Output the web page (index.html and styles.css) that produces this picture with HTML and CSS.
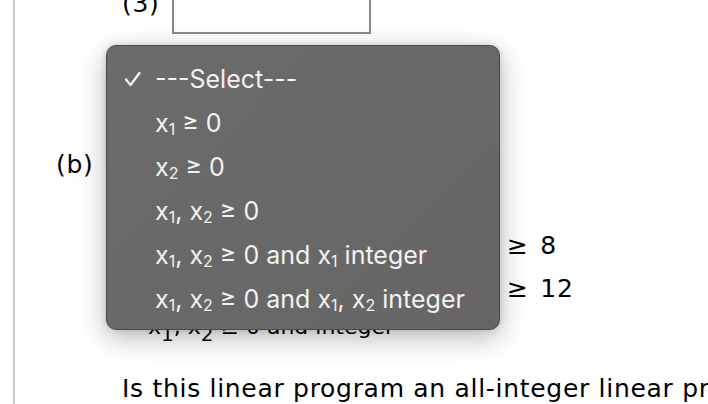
FILE: index.html
```html
<!DOCTYPE html>
<html>
<head>
<meta charset="utf-8">
<link rel="stylesheet" href="styles.css">
</head>
<body>
<div class="page">
  <div class="row3">
    <span class="label3">(3)</span>
    <span class="box"></span>
  </div>
  <div class="rowb">(b)</div>
  <div class="c1">&ge; 8</div>
  <div class="c2">&ge; 12</div>
  <div class="c3">x<sub>1</sub>, x<sub>2</sub> &ge; 0 and integer</div>
  <p class="question">Is this linear program an all-integer linear program?</p>
</div>
<div class="menu">
  <div class="item sel"><svg class="check" width="18" height="16" viewBox="0 0 18 16"><polyline points="2,8.5 6.5,14 15.5,2" fill="none" stroke="#f2f2f2" stroke-width="2.3" stroke-linecap="round" stroke-linejoin="round"/></svg>---Select---</div>
  <div class="item">x<sub>1</sub> &ge; 0</div>
  <div class="item">x<sub>2</sub> &ge; 0</div>
  <div class="item">x<sub>1</sub>, x<sub>2</sub> &ge; 0</div>
  <div class="item">x<sub>1</sub>, x<sub>2</sub> &ge; 0 and x<sub>1</sub> integer</div>
  <div class="item">x<sub>1</sub>, x<sub>2</sub> &ge; 0 and x<sub>1</sub>, x<sub>2</sub> integer</div>
</div>
</body>
</html>
```
FILE: styles.css
```css
html, body {
  margin: 0;
  padding: 0;
  background: #fff;
  overflow: hidden;
}
body {
  width: 708px;
  height: 404px;
  position: relative;
  font-family: "DejaVu Sans", Verdana, sans-serif;
  font-size: 25px;
  letter-spacing: 0.7px;
  line-height: 28px;
  color: #000;
}
.page {
  display: flow-root;
  margin-left: 13px;
  border-left: 2px solid #c8c8c8;
  height: 404px;
  box-sizing: border-box;
  overflow: hidden;
}
.row3 {
  display: flex;
  align-items: flex-end;
  margin-top: -40px;
  padding-left: 107px;
  height: 74px;
}
.label3 {
  margin-bottom: 16px;
}
.box {
  width: 195px;
  height: 50px;
  border: 2px solid #8a8a8a;
  margin-left: 12px;
}
.rowb {
  margin-top: 117px;
  padding-left: 41px;
  height: 28px;
}
.c1 {
  margin-top: 53px;
  padding-left: 492px;
  height: 43px;
  word-spacing: 3px;
}
.c2 {
  padding-left: 492px;
  height: 38px;
  word-spacing: 3px;
}
.c3 {
  padding-left: 133px;
  height: 28px;
  font-size: 22px;
  letter-spacing: 0;
}
.c3 sub {
  font-size: 20px;
  vertical-align: -7px;
  line-height: 0;
}
.question {
  margin: 34px 0 0 107px;
  white-space: nowrap;
}
.menu {
  position: absolute;
  left: 106px;
  top: 45px;
  width: 394px;
  height: 285px;
  box-sizing: border-box;
  padding: 11px 0 0 0;
  background: linear-gradient(135deg, #6b6b6b 0%, #686868 60%, #676564 100%);
  border: 1px solid #4a4a4a;
  border-radius: 10px;
  box-shadow: 0 8px 28px rgba(0,0,0,0.28), 0 0 6px rgba(0,0,0,0.15);
  font-family: Inter, "Liberation Sans", Arial, sans-serif;
  font-size: 25px;
  letter-spacing: 0;
  color: #f2f2f2;
}
.item {
  height: 44px;
  line-height: 44px;
  padding-left: 48px;
  position: relative;
  white-space: nowrap;
}
.item sub {
  font-size: 16px;
  vertical-align: -3px;
  line-height: 0;
}
.check {
  position: absolute;
  left: 17px;
  top: 14px;
}
```
